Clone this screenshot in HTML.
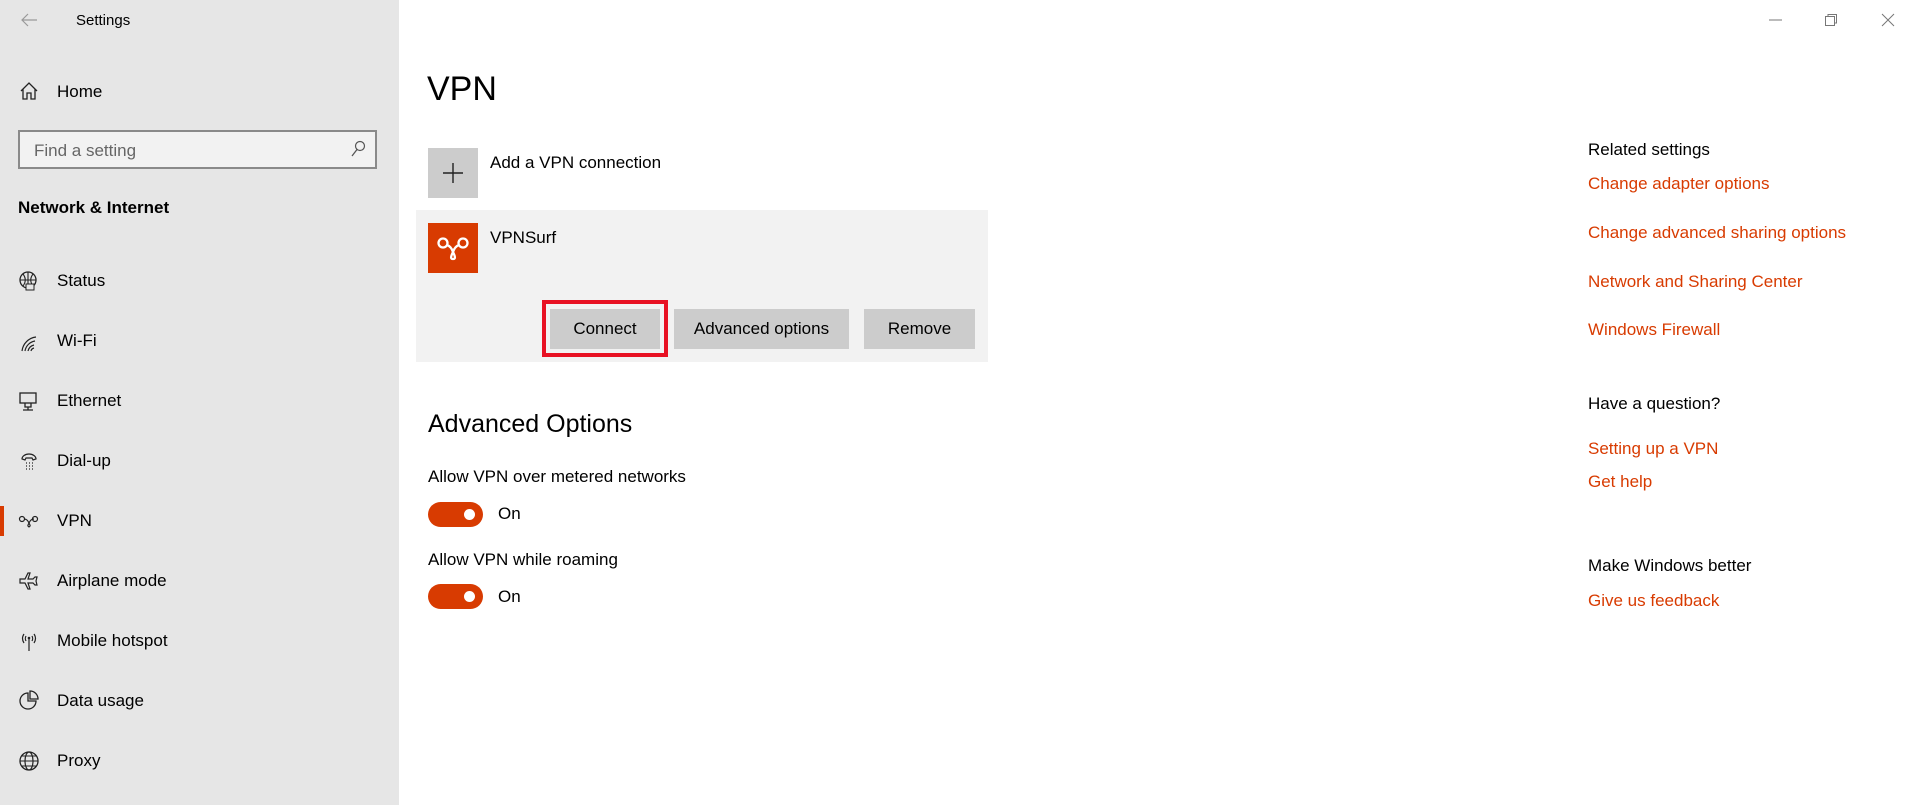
<!DOCTYPE html>
<html><head><meta charset="utf-8"><style>
*{margin:0;padding:0;box-sizing:border-box}
body{width:1918px;height:805px;overflow:hidden;background:#fff;font-family:"Liberation Sans",sans-serif;color:#000;position:relative}
.a{position:absolute;white-space:nowrap}
#side{position:absolute;left:0;top:0;width:399px;height:805px;background:#e6e6e6}
.nav{font-size:17px;line-height:20px}
.ic{position:absolute;left:18px;width:22px;height:22px}
.lnk{color:#d83b01;font-size:17px;line-height:20px}
.btn{position:absolute;top:309px;height:40px;background:#cccccc;font-size:17px;line-height:40px;text-align:center}
.tog{position:absolute;left:428px;width:55px;height:25px;border-radius:13px;background:#d83b01}
.tog::after{content:"";position:absolute;right:8px;top:7px;width:11px;height:11px;border-radius:50%;background:#fff}
</style></head><body>
<div id="side">
<svg class="a" style="left:20px;top:12px" width="18" height="16" viewBox="0 0 18 16"><path d="M17 8H2M8 2L2 8l6 6" stroke="#999" stroke-width="1.2" fill="none"/></svg>
<div class="a" style="left:76px;top:12px;font-size:15px">Settings</div>
<svg class="a" style="left:18px;top:80px" width="22" height="22" viewBox="0 0 22 22"><path d="M3 11L11 3l8 8M5 9v10h4v-6h4v6h4V9" stroke="#222" stroke-width="1.3" fill="none"/></svg>
<div class="a nav" style="left:57px;top:82px">Home</div>
<div class="a" style="left:18px;top:130px;width:359px;height:39px;border:2px solid #8a8a8a;background:#f2f2f2"></div>
<div class="a" style="left:34px;top:141px;font-size:17px;color:#666">Find a setting</div>
<svg class="a" style="left:350px;top:140px" width="16" height="18" viewBox="0 0 16 18"><circle cx="10" cy="6" r="4.5" stroke="#555" stroke-width="1.2" fill="none"/><path d="M7 9.5L2 16" stroke="#555" stroke-width="1.3"/></svg>
<div class="a" style="left:18px;top:198px;font-size:17px;font-weight:bold">Network &amp; Internet</div>

<svg class="ic" style="top:270px" viewBox="0 0 22 22"><circle cx="10" cy="10" r="8" stroke="#222" stroke-width="1.3" fill="none"/><path d="M2 10h16M10 2v16M5 4c3 4 3 8 0 12M15 4c-3 4-3 8 0 12" stroke="#222" stroke-width="1.1" fill="none"/><rect x="8" y="14" width="8" height="6" fill="#e6e6e6" stroke="#222"/></svg>
<div class="a nav" style="left:57px;top:271px">Status</div>
<svg class="ic" style="top:331px" viewBox="0 0 22 22"><path d="M4 20A16 16 0 0 1 18 6M7 20A12 12 0 0 1 17 10M10 20A8 8 0 0 1 16 14M13 20A4 4 0 0 1 16 17" stroke="#222" stroke-width="1.2" fill="none"/></svg>
<div class="a nav" style="left:57px;top:331px">Wi-Fi</div>
<svg class="ic" style="top:390px" viewBox="0 0 22 22"><rect x="2" y="3" width="16" height="10" stroke="#222" stroke-width="1.3" fill="none"/><path d="M7 13v4h6v-4M10 17v3M5 20h10" stroke="#222" stroke-width="1.3" fill="none"/></svg>
<div class="a nav" style="left:57px;top:391px">Ethernet</div>
<svg class="ic" style="top:450px" viewBox="0 0 22 22"><path d="M4 9a7 5 0 0 1 14 0l-3 1-1-2h-6l-1 2z" stroke="#222" stroke-width="1.2" fill="none"/><path d="M8 13h1M11 13h1M14 13h1M8 16h1M11 16h1M14 16h1M8 19h1M11 19h1M14 19h1" stroke="#222" stroke-width="1.2"/></svg>
<div class="a nav" style="left:57px;top:451px">Dial-up</div>
<div class="a" style="left:0;top:506px;width:4px;height:30px;background:#d83b01"></div>
<svg class="ic" style="top:510px" viewBox="0 0 22 22"><circle cx="4" cy="9" r="2.5" stroke="#222" stroke-width="1.2" fill="none"/><circle cx="17" cy="9" r="2.5" stroke="#222" stroke-width="1.2" fill="none"/><path d="M6 9c3 0 4 2 5 4-1 2-2 3 0 4 2-1 1-2 0-4 1-2 2-4 5-4" stroke="#222" stroke-width="1.2" fill="none"/></svg>
<div class="a nav" style="left:57px;top:511px">VPN</div>
<svg class="ic" style="top:570px" viewBox="0 0 22 22"><path d="M2 9h5l3-6h2l-2 6h5l2-2h2l-1 4 1 4h-2l-2-2h-5l2 6h-2l-3-6H2z" stroke="#222" stroke-width="1.2" fill="none"/></svg>
<div class="a nav" style="left:57px;top:571px">Airplane mode</div>
<svg class="ic" style="top:630px" viewBox="0 0 22 22"><path d="M11 9v12M6 4c-2 3-2 6 0 9M16 4c2 3 2 6 0 9M8 6c-1 2-1 3 0 5M14 6c1 2 1 3 0 5" stroke="#222" stroke-width="1.2" fill="none"/><circle cx="11" cy="8" r="1.3" fill="#222"/></svg>
<div class="a nav" style="left:57px;top:631px">Mobile hotspot</div>
<svg class="ic" style="top:690px" viewBox="0 0 22 22"><path d="M10 3a8 8 0 1 0 8 8h-8z" stroke="#222" stroke-width="1.3" fill="none"/><path d="M12 1v8h8a8 8 0 0 0-8-8z" stroke="#222" stroke-width="1.3" fill="none"/></svg>
<div class="a nav" style="left:57px;top:691px">Data usage</div>
<svg class="ic" style="top:750px" viewBox="0 0 22 22"><circle cx="11" cy="11" r="9" stroke="#222" stroke-width="1.3" fill="none"/><ellipse cx="11" cy="11" rx="4" ry="9" stroke="#222" stroke-width="1.2" fill="none"/><path d="M2 11h18M4 6h14M4 16h14" stroke="#222" stroke-width="1.1"/></svg>
<div class="a nav" style="left:57px;top:751px">Proxy</div>
</div>

<svg class="a" style="left:1768px;top:14px" width="16" height="12"><path d="M1 6h13" stroke="#777" stroke-width="1"/></svg>
<svg class="a" style="left:1824px;top:13px" width="14" height="14"><rect x="1.5" y="3.5" width="9" height="9" stroke="#777" fill="none"/><path d="M4 3.5V1.5h8.5v8.5h-2" stroke="#777" fill="none"/></svg>
<svg class="a" style="left:1881px;top:13px" width="14" height="14"><path d="M1 1l12 12M13 1L1 13" stroke="#777" stroke-width="1"/></svg>

<div class="a" style="left:427px;top:70px;font-size:34px">VPN</div>
<div class="a" style="left:428px;top:148px;width:50px;height:50px;background:#cccccc"></div>
<svg class="a" style="left:441px;top:161px" width="24" height="24"><path d="M12 2v20M2 12h20" stroke="#222" stroke-width="1.4"/></svg>
<div class="a" style="left:490px;top:153px;font-size:17px">Add a VPN connection</div>

<div class="a" style="left:416px;top:210px;width:572px;height:152px;background:#f2f2f2"></div>
<div class="a" style="left:428px;top:223px;width:50px;height:50px;background:#d83b01"></div>
<svg class="a" style="left:428px;top:223px" width="50" height="50" viewBox="0 0 50 50"><circle cx="15" cy="20" r="4.5" stroke="#fff" stroke-width="2.3" fill="none"/><circle cx="35" cy="20" r="4.5" stroke="#fff" stroke-width="2.3" fill="none"/><path d="M19 22c3 1 5 4 6 7-2 4-3 7 0 7 3 0 2-3 0-7 1-3 3-6 6-7" stroke="#fff" stroke-width="2.3" fill="none"/></svg>
<div class="a" style="left:490px;top:228px;font-size:17px">VPNSurf</div>
<div class="a" style="left:542px;top:300px;width:126px;height:57px;border:4px solid #e81123"></div>
<div class="btn" style="left:550px;width:110px">Connect</div>
<div class="btn" style="left:674px;width:175px">Advanced options</div>
<div class="btn" style="left:864px;width:111px">Remove</div>

<div class="a" style="left:428px;top:410px;font-size:25px">Advanced Options</div>
<div class="a" style="left:428px;top:467px;font-size:17px">Allow VPN over metered networks</div>
<div class="tog" style="top:502px"></div>
<div class="a" style="left:498px;top:504px;font-size:17px">On</div>
<div class="a" style="left:428px;top:550px;font-size:17px">Allow VPN while roaming</div>
<div class="tog" style="top:584px"></div>
<div class="a" style="left:498px;top:587px;font-size:17px">On</div>

<div class="a" style="left:1588px;top:140px;font-size:17px">Related settings</div>
<div class="a lnk" style="left:1588px;top:174px">Change adapter options</div>
<div class="a lnk" style="left:1588px;top:223px">Change advanced sharing options</div>
<div class="a lnk" style="left:1588px;top:272px">Network and Sharing Center</div>
<div class="a lnk" style="left:1588px;top:320px">Windows Firewall</div>
<div class="a" style="left:1588px;top:394px;font-size:17px">Have a question?</div>
<div class="a lnk" style="left:1588px;top:439px">Setting up a VPN</div>
<div class="a lnk" style="left:1588px;top:472px">Get help</div>
<div class="a" style="left:1588px;top:556px;font-size:17px">Make Windows better</div>
<div class="a lnk" style="left:1588px;top:591px">Give us feedback</div>
</body></html>
